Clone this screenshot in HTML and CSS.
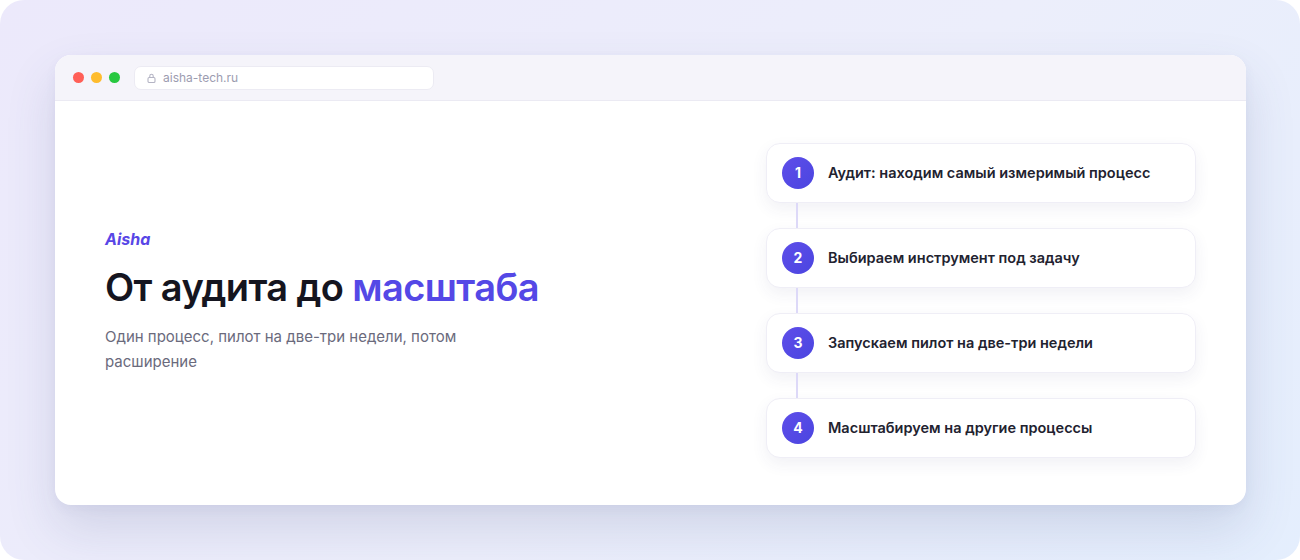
FILE: index.html
```html
<!DOCTYPE html>
<html lang="ru">
<head>
  <meta charset="utf-8">
  <title>Aisha — От аудита до масштаба</title>
  <link rel="stylesheet" href="styles.css">
</head>
<body>
  <div class="stage">
    <div class="window">

      <div class="window-bar">
        <div class="dots">
          <span class="dot red"></span>
          <span class="dot yellow"></span>
          <span class="dot green"></span>
        </div>
        <div class="url-bar">
          <svg class="lock" width="9" height="10" viewBox="0 0 9 10">
            <rect x="1" y="4.5" width="7" height="5" rx="1.2" fill="none" stroke="currentColor" stroke-width="1.1"/>
            <path d="M2.8 4.5V3a1.7 1.7 0 0 1 3.4 0v1.5" fill="none" stroke="currentColor" stroke-width="1.1"/>
          </svg>
          <span>aisha-tech.ru</span>
        </div>
      </div>

      <div class="window-body">
        <div class="intro">
          <div class="brand">Aisha</div>
          <h1 class="title">От аудита до <span class="accent">масштаба</span></h1>
          <p class="lead">Один процесс, пилот на две-три недели, потом расширение</p>
        </div>

        <ol class="steps">
          <li class="step">
            <span class="step-num">1</span>
            <span class="step-text">Аудит: находим самый измеримый процесс</span>
          </li>
          <li class="step">
            <span class="step-num">2</span>
            <span class="step-text">Выбираем инструмент под задачу</span>
          </li>
          <li class="step">
            <span class="step-num">3</span>
            <span class="step-text">Запускаем пилот на две-три недели</span>
          </li>
          <li class="step">
            <span class="step-num">4</span>
            <span class="step-text">Масштабируем на другие процессы</span>
          </li>
        </ol>
      </div>

    </div>
  </div>
</body>
</html>
```

FILE: styles.css
```css
    body {
      margin: 0;
      padding: 0;
      background: #ffffff;
      font-family: Inter, "Noto Sans", Arial, sans-serif;
    }

    .stage {
      height: 560px;
      box-sizing: border-box;
      padding: 55px 54px 55px 55px;
      border-radius: 24px;
      background: linear-gradient(135deg, #ece9fb 0%, #eceefb 55%, #e4eefd 100%);
    }

    .window {
      height: 450px;
      display: flex;
      flex-direction: column;
      background: #ffffff;
      border-radius: 16px;
      overflow: hidden;
      box-shadow: 0 24px 50px rgba(70, 80, 130, 0.16), 0 4px 12px rgba(70, 80, 130, 0.05);
    }

    .window-bar {
      height: 45px;
      flex: none;
      display: flex;
      align-items: center;
      padding: 0 18px;
      background: #f5f4fa;
      border-bottom: 1px solid #ebeaf3;
    }

    .dots {
      display: flex;
      gap: 7px;
    }

    .dot {
      width: 11px;
      height: 11px;
      border-radius: 50%;
    }

    .dot.red { background: #ff5f57; }
    .dot.yellow { background: #febc2e; }
    .dot.green { background: #28c840; }

    .url-bar {
      margin-left: 14px;
      width: 300px;
      height: 24px;
      box-sizing: border-box;
      display: flex;
      align-items: center;
      gap: 7px;
      padding-left: 12px;
      background: #ffffff;
      border: 1px solid #ecebf3;
      border-radius: 7px;
      color: #9c9cb0;
      font-size: 12px;
    }

    .lock {
      color: #b4b4c4;
    }

    .window-body {
      flex: 1;
      display: flex;
      align-items: center;
      justify-content: space-between;
      padding: 0 50px 6px 50px;
    }

    .intro {
      width: 560px;
      padding-top: 3px;
    }

    .brand {
      font-size: 16px;
      font-weight: 700;
      font-style: italic;
      color: #5846e6;
      margin-bottom: 16px;
    }

    .title {
      margin: 0;
      font-size: 38px;
      font-weight: 600;
      letter-spacing: -0.6px;
      line-height: 1.2;
      color: #15151f;
    }

    .accent {
      color: #5448e6;
    }

    .lead {
      margin: 13px 0 0;
      width: 370px;
      font-size: 15px;
      line-height: 25px;
      color: #6a6a7c;
    }

    .steps {
      list-style: none;
      margin: 0;
      padding: 0;
      width: 430px;
      display: flex;
      flex-direction: column;
      gap: 25px;
    }

    .step {
      position: relative;
      height: 60px;
      box-sizing: border-box;
      display: flex;
      align-items: center;
      gap: 14px;
      padding-left: 15px;
      background: #ffffff;
      border: 1px solid #efeef6;
      border-radius: 14px;
      box-shadow: 0 6px 16px rgba(60, 60, 110, 0.07);
    }

    .step + .step::before {
      content: "";
      position: absolute;
      left: 29px;
      top: -26px;
      width: 2px;
      height: 25px;
      background: #ddd9f8;
    }

    .step-num {
      width: 32px;
      height: 32px;
      flex: none;
      border-radius: 50%;
      display: flex;
      align-items: center;
      justify-content: center;
      background: linear-gradient(135deg, #5e4ee9, #4b45e0);
      color: #ffffff;
      font-size: 14px;
      font-weight: 700;
    }

    .step-text {
      font-size: 14.5px;
      font-weight: 600;
      color: #22222f;
    }
```
